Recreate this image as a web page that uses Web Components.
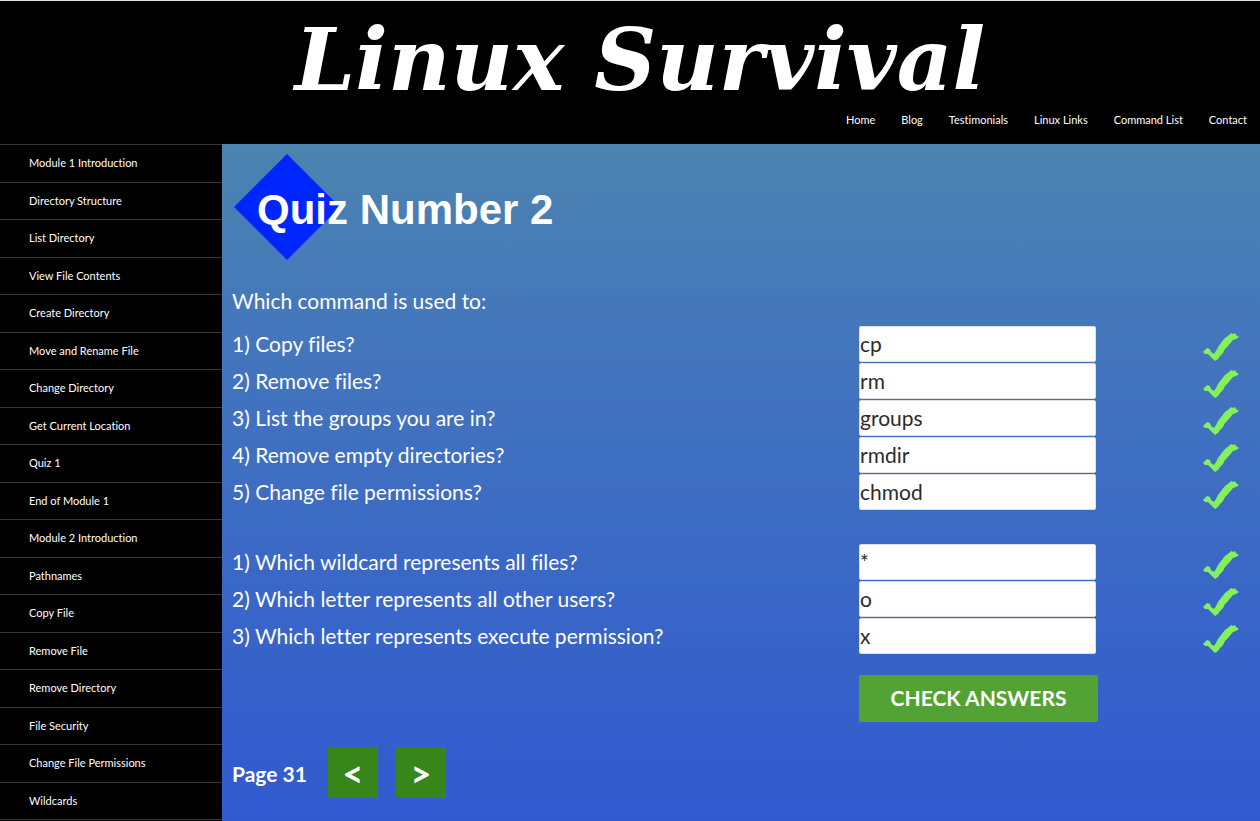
<!DOCTYPE html>
<html lang="en">
<head>
<meta charset="utf-8">
<meta name="viewport" content="width=device-width, initial-scale=1">
<title>Linux Survival - Quiz Number 2</title>
<style>
  html, body { margin: 0; }
  body { background: #000; color: #fff; font-family: Lato, sans-serif; font-variant-ligatures: none; }
</style>
</head>
<body>
<survival-page></survival-page>
<script>
const define = (name, html, setup) => {
  const template = document.createElement('template');
  template.innerHTML = '<style>*{box-sizing:border-box}</style>' + html;
  customElements.define(name, class extends HTMLElement {
    constructor() {
      super();
      this.attachShadow({ mode: 'open' }).append(template.content.cloneNode(true));
    }
    connectedCallback() { if (setup) setup.call(this, this.shadowRoot); }
  });
};

define('site-header', `
  <style>
    :host { display: block; background: #000; border-top: 1px solid #dfe3e1; }
    h1 { margin: 0; padding: 10px 0 0 20px; text-align: center; white-space: nowrap;
         font: italic bold 86px/98px "Lucida Calligraphy", "DejaVu Serif", serif; }
    nav { display: flex; justify-content: flex-end; gap: 26px; height: 35px; padding: 2px 13px 0 0; }
    a { color: #fff; text-decoration: none; font-size: 11px; line-height: 18px; }
  </style>
  <h1>Linux Survival</h1>
  <nav aria-label="Main">
    <a href="#home">Home</a><a href="#blog">Blog</a><a href="#testimonials">Testimonials</a><a href="#links">Linux Links</a><a href="#commands">Command List</a><a href="#contact">Contact</a>
  </nav>`);

define('side-link', `
  <style>
    :host { display: block; height: 37px; padding: 9px 0 0 29px; border-top: 1px solid #383838; }
    :host(:nth-child(odd)) { height: 38px; }
    a { display: block; color: #fff; text-decoration: none; font-size: 11px; line-height: 18px; }
  </style>
  <a href="#lesson"><slot></slot></a>`);

define('side-menu', `
  <style>
    :host { display: block; background: #000; }
    nav { border-bottom: 1px solid #383838; }
  </style>
  <nav aria-label="Lessons"></nav>`, function (root) {
  const nav = root.querySelector('nav');
  for (const title of ['Module 1 Introduction', 'Directory Structure', 'List Directory', 'View File Contents',
    'Create Directory', 'Move and Rename File', 'Change Directory', 'Get Current Location', 'Quiz 1',
    'End of Module 1', 'Module 2 Introduction', 'Pathnames', 'Copy File', 'Remove File', 'Remove Directory',
    'File Security', 'Change File Permissions', 'Wildcards']) {
    const link = document.createElement('side-link');
    link.textContent = title;
    nav.append(link);
  }
});

define('quiz-title', `
  <style>
    :host { display: grid; align-items: center; }
    svg, h2 { grid-area: 1 / 1; }
    svg { display: block; width: 106px; height: 106px; }
    h2 { margin: 0; padding: 6px 0 0 23px; font: bold 42px/48px "Liberation Sans", Arial, sans-serif; z-index: 1; }
  </style>
  <svg viewBox="0 0 106 106" aria-hidden="true"><path d="M53 0 106 53 53 106 0 53z" fill="#0026ff"/></svg>
  <h2><slot></slot></h2>`);

define('quiz-question', `
  <style>
    :host { display: grid; grid-template-columns: minmax(0, 1fr) 237px 57px; column-gap: 107px;
            height: 36px; align-items: start; }
    label { font-size: 21px; line-height: 36px; }
    input { width: 100%; height: 36px; margin: 0; padding: 0 0 2px; border: 1px solid #dcdfe5; border-radius: 2px;
            background: #fff; color: #2b2b2b; font: 21px/32px Lato, sans-serif; font-variant-ligatures: none; outline: 0; }
    svg { display: block; width: 36px; height: 30px; margin-top: 6px; }
  </style>
  <label for="answer"><slot></slot></label>
  <input id="answer" type="text">
  <svg viewBox="0 0 36 30" role="img" aria-label="Correct"><path fill="#83f15a" d="M0 20 4 16 7 17 8 20 11 22 13 19 15 15 18 11 22 6 26 3 28 1 30 2 32 1 33 3 36 5 33 7 30 8 25 14 22 17 20 21 17 24 15 27 12 29 10 27 7 24 5 22 2 22z"/></svg>`,
function (root) { root.querySelector('input').value = this.getAttribute('answer'); });

define('question-group', `
  <style>:host { display: grid; row-gap: 1px; }</style>
  <slot></slot>`);

define('page-button', `
  <style>
    :host { display: block; }
    button { display: block; width: 50px; height: 51px; margin: 0; padding: 0; border: 0;
             background: #37861a; color: #fff; font: bold 36px/48px Lato, sans-serif; }
  </style>
  <button type="button"><slot></slot></button>`, function (root) {
  root.querySelector('button').setAttribute('aria-label', this.getAttribute('label'));
});

define('quiz-panel', `
  <style>
    :host { display: block; padding: 10px 0 23px 10px; background: linear-gradient(#4c83b0, #4577bb 26%, #3b69c5 60%, #315ad0); }
    quiz-title { margin-left: 2px; }
    p { margin: 23px 0 8px; font-size: 21px; line-height: 35px; }
    question-group + question-group { margin-top: 34px; }
    .submit { display: grid; grid-template-columns: minmax(0, 1fr) 401px; margin: 21px 0 25px; }
    .submit button { width: 239px; height: 47px; border: 0; padding: 0 0 2px; border-radius: 2px;
      background: #52a333; color: #fff; font: bold 21px/45px Lato, sans-serif; grid-column: 2; }
    .pager { display: flex; align-items: center; gap: 18px; }
    strong { font-size: 21px; line-height: 36px; padding-top: 2px; margin-right: 3px; }
  </style>
  <quiz-title>Quiz Number 2</quiz-title>
  <form onsubmit="return false">
    <p>Which command is used to:</p>
    <question-group>
      <quiz-question answer="cp">1) Copy files?</quiz-question>
      <quiz-question answer="rm">2) Remove files?</quiz-question>
      <quiz-question answer="groups">3) List the groups you are in?</quiz-question>
      <quiz-question answer="rmdir">4) Remove empty directories?</quiz-question>
      <quiz-question answer="chmod">5) Change file permissions?</quiz-question>
    </question-group>
    <question-group>
      <quiz-question answer="*">1) Which wildcard represents all files?</quiz-question>
      <quiz-question answer="o">2) Which letter represents all other users?</quiz-question>
      <quiz-question answer="x">3) Which letter represents execute permission?</quiz-question>
    </question-group>
    <div class="submit"><button type="submit">CHECK ANSWERS</button></div>
  </form>
  <div class="pager">
    <strong>Page 31</strong>
    <page-button label="Previous page">&lt;</page-button>
    <page-button label="Next page">&gt;</page-button>
  </div>`);

define('survival-page', `
  <style>
    :host { display: block; }
    .body { display: grid; grid-template-columns: 222px minmax(0, 1fr); }
  </style>
  <site-header></site-header>
  <div class="body"><side-menu></side-menu><quiz-panel></quiz-panel></div>`);
</script>
</body>
</html>
